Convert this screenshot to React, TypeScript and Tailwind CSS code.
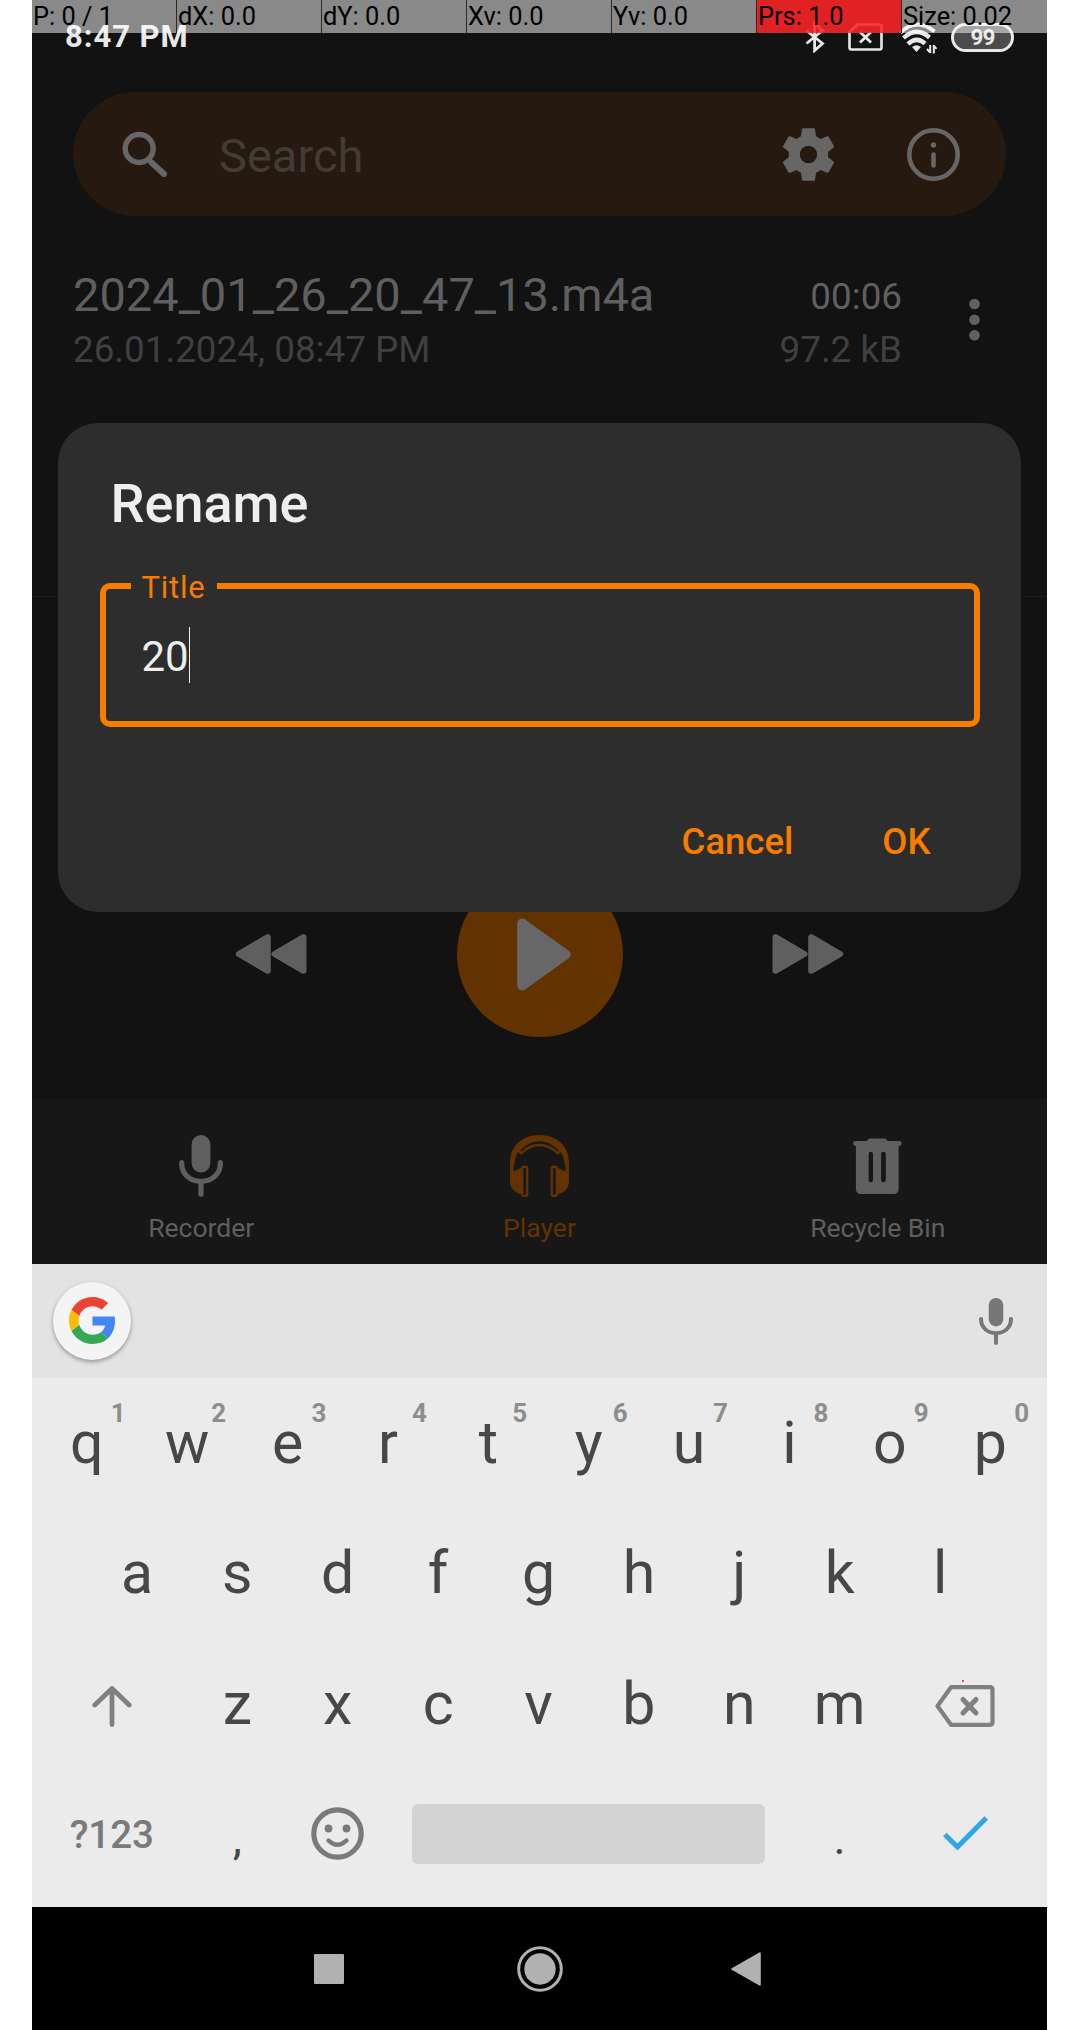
import type { ReactNode } from 'react';

const POINTER_CELLS = ['P: 0 / 1', 'dX: 0.0', 'dY: 0.0', 'Xv: 0.0', 'Yv: 0.0', 'Prs: 1.0', 'Size: 0.02'];

const TOP_KEYS: [string, string][] = [
  ['q', '1'],
  ['w', '2'],
  ['e', '3'],
  ['r', '4'],
  ['t', '5'],
  ['y', '6'],
  ['u', '7'],
  ['i', '8'],
  ['o', '9'],
  ['p', '0'],
];

function PointerBar() {
  return (
    <div className="absolute inset-x-0 top-0 flex h-[33px] bg-white/50">
      {POINTER_CELLS.map((label) => (
        <div
          key={label}
          className={
            'w-[145px] shrink-0 whitespace-nowrap border-r border-[#2a2a2a] last:border-r-0 ' +
            'pl-px text-[25.4px] leading-[32px] text-black ' +
            (label.startsWith('Prs') ? 'bg-[#ff0000]/75' : '')
          }
        >
          {label}
        </div>
      ))}
    </div>
  );
}

function StatusBar() {
  return (
    <div className="flex h-[92px] items-start justify-between pl-[33px] pr-[33px] pt-[19px] text-[#e8e8e8]">
      <span className="text-[31px] font-bold leading-[36px] tracking-[0.95px]">8:47 PM</span>
      <div className="flex h-[36px] items-center">
        <svg width="20" height="32" viewBox="0 0 20 32" fill="none" stroke="currentColor" strokeWidth="2.8">
          <path d="M1.5 9.5 17.5 22.5 9.6 29.5V2.5L17.5 9.5 1.5 22.5" />
        </svg>
        <svg className="ml-[23px]" width="35" height="28" viewBox="0 0 35 28" fill="none" stroke="currentColor">
          <path strokeWidth="2.6" strokeLinejoin="round" d="M9.5 1.5H31.5Q33.5 1.5 33.5 3.5V24.5Q33.5 26.5 31.5 26.5H3.5Q1.5 26.5 1.5 24.5V9Z" />
          <path strokeWidth="2.8" d="M12 9 23 19.5M23 9 12 19.5" />
        </svg>
        <svg className="ml-[16px]" width="38" height="34" viewBox="0 0 38 34" fill="none" stroke="currentColor">
          <path strokeWidth="4" d="M1.5 12.5Q17.5-3 35.5 11.5" />
          <path strokeWidth="4.4" d="M4.5 18Q17.5 6 30.5 17.5" />
          <path strokeWidth="4.4" d="M9 24Q17.5 16 26 23.5" />
          <path fill="currentColor" stroke="none" d="M13 27Q17.500 23.5 22 27L17.5 32Z" />
          <path strokeWidth="2" d="M31.2 25V33M34.8 25V33.5M31.2 32.5 28 29M34.8 25.5 37.5 29" />
        </svg>
        <div className="ml-[14px] flex h-[29px] w-[63px] items-center justify-center rounded-full border-[3.5px] border-[#e8e8e8] bg-[#4c4c4c] text-[22.5px] font-bold leading-none tracking-[-1px]">
          99
        </div>
      </div>
    </div>
  );
}

function SearchBar() {
  return (
    <div className="mx-[41px] flex h-[124px] items-center rounded-full bg-[#26190f] pl-[49px] pr-[46px] text-[#666666]">
      <svg width="46" height="46" viewBox="0 0 46 46" fill="none" stroke="currentColor">
        <circle cx="17.2" cy="17.5" r="14" strokeWidth="5.4" />
        <path d="M29.5 31.5 42 43" strokeWidth="6" strokeLinecap="round" />
      </svg>
      <span className="ml-[51px] flex-1 pt-1 text-[47px] leading-[56px] text-[#433c35]">Search</span>
      <svg width="63" height="63" viewBox="0 0 24 24" fill="currentColor">
        <path d="M19.43 12.98c.04-.32.07-.64.07-.98s-.03-.66-.07-.98l2.11-1.65c.19-.15.24-.42.12-.64l-2-3.46c-.12-.22-.39-.3-.61-.22l-2.49 1c-.52-.4-1.08-.73-1.69-.98l-.38-2.65C14.46 2.18 14.25 2 14 2h-4c-.25 0-.46.18-.49.42l-.38 2.65c-.61.25-1.17.59-1.69.98l-2.49-1c-.23-.09-.49 0-.61.22l-2 3.46c-.13.22-.07.49.12.64l2.11 1.65c-.04.32-.07.65-.07.98s.03.66.07.98l-2.11 1.65c-.19.15-.24.42-.12.64l2 3.46c.12.22.39.3.61.22l2.49-1c.52.4 1.08.73 1.69.98l.38 2.65c.03.24.24.42.49.42h4c.25 0 .46-.18.49-.42l.38-2.65c.61-.25 1.17-.59 1.69-.98l2.49 1c.23.09.49 0 .61-.22l2-3.46c.12-.22.07-.49-.12-.64l-2.11-1.65zM12 15.3a3.3 3.3 0 1 1 0-6.6 3.3 3.3 0 0 1 0 6.6z" />
      </svg>
      <svg className="ml-[67px]" width="53" height="53" viewBox="0 0 53 53" fill="none" stroke="currentColor">
        <circle cx="26.5" cy="26.5" r="24.2" strokeWidth="4.6" />
        <circle cx="26.5" cy="17" r="2.7" fill="currentColor" stroke="none" />
        <path d="M26.5 26.5V37.5" strokeWidth="4.6" strokeLinecap="round" />
      </svg>
    </div>
  );
}

function Recording() {
  return (
    <div className="flex h-[381px] border-b border-[#1b1b1b] pl-[41px] pr-[67px] pt-[51px]">
      <div className="flex-1">
        <div className="text-[47px] leading-[56px] text-[#5f5f5f]">2024_01_26_20_47_13.m4a</div>
        <div className="mt-[5px] text-[36.8px] leading-[44px] text-[#404040]">26.01.2024, 08:47 PM</div>
      </div>
      <div className="pt-2 text-right text-[36.8px] leading-[44px]">
        <div className="text-[#5f5f5f]">00:06</div>
        <div className="mt-[9px] text-[#404040]">97.2 kB</div>
      </div>
      <svg className="ml-[67px] mt-[31px] text-[#616161]" width="11" height="44" viewBox="0 0 11 44" fill="currentColor">
        <circle cx="5.5" cy="6" r="5.3" />
        <circle cx="5.5" cy="21.7" r="5.3" />
        <circle cx="5.5" cy="37.3" r="5.3" />
      </svg>
    </div>
  );
}

function SkipIcon({ back = false }: { back?: boolean }) {
  return (
    <svg
      className={back ? '-scale-x-100' : ''}
      width="72"
      height="40"
      viewBox="0 0 72 40"
      fill="currentColor"
      stroke="currentColor"
      strokeWidth="6"
      strokeLinejoin="round"
    >
      <path d="M3.5 3.2V36.8L32.5 20Z" />
      <path d="M39.2 3.2V36.8L68.2 20Z" />
    </svg>
  );
}

function Controls() {
  return (
    <div className="flex h-[502px] items-end justify-center pb-[62px] text-[#5f5f5f]">
      <div className="flex h-[166px] w-[268px] items-center justify-center pr-[2px]">
        <SkipIcon back />
      </div>
      <div className="flex w-[268px] justify-center">
        <div className="flex h-[166px] w-[166px] items-center justify-center rounded-full bg-[#623200] pl-[9px] text-[#676767]">
          <svg width="54" height="73" viewBox="0 0 54 73" fill="currentColor" stroke="currentColor" strokeWidth="10" strokeLinejoin="round">
            <path d="M5.2 5.5V67.5L48.5 36.5Z" />
          </svg>
        </div>
      </div>
      <div className="flex h-[166px] w-[268px] items-center justify-center">
        <SkipIcon />
      </div>
    </div>
  );
}

function MicIcon({ width, height }: { width: number; height: number }) {
  return (
    <svg width={width} height={height} viewBox="0 0 44 62" preserveAspectRatio="none" fill="none" stroke="currentColor">
      <rect x="12.6" y="0" width="18.8" height="37.5" rx="9.4" fill="currentColor" stroke="none" />
      <path d="M2.7 27.5V28.5C2.7 39 11 46.3 22 46.3S41.3 39 41.3 28.5V27.5M22 47V59.2" strokeWidth="5.2" strokeLinecap="round" />
    </svg>
  );
}

function HeadphonesIcon() {
  return (
    <svg width="59" height="62" viewBox="0 0 59 62" fill="currentColor">
      <path d="M0 46V28C0 11 12 0 29.5 0S59 11 59 28V46C59 53 54.5 58 48 59V33L55.5 36.5V32L54 26C53.5 22 52.5 19.5 51 17.5L48 19.5C43 12 37 6.5 29.5 6.5S16 12 11 19.5L8 17.5C6.5 19.5 5.5 22 5 26L3.5 32V36.5L11 33V59C4.5 58 0 53 0 46Z" />
      <path d="M11.5 16.5C22 5.5 37 5.5 47.5 16.5" fill="none" stroke="#171717" strokeWidth="3.5" />
      <path d="M11.5 18C22 7.3 37 7.3 47.5 18" fill="none" stroke="currentColor" strokeWidth="2.5" strokeLinecap="round" />
      <rect x="12.2" y="31.7" width="5" height="29" rx="1.5" fill="#171717" stroke="currentColor" strokeWidth="2.4" />
      <rect x="41.8" y="31.7" width="5" height="29" rx="1.5" fill="#171717" stroke="currentColor" strokeWidth="2.4" />
    </svg>
  );
}

function TrashIcon() {
  return (
    <svg width="49" height="62" viewBox="0 0 49 62" fill="currentColor">
      <rect x="0.2" y="6" width="48.4" height="5" rx="2.4" />
      <path d="M14 6.5Q14.5 3.5 17 3.5H31.5Q34 3.5 34.5 6.5Z" />
      <path
        fillRule="evenodd"
        d="M2.9 8H45.6V54Q45.6 59 40.6 59H7.9Q2.9 59 2.9 54ZM17.8 16.8Q15.7 16.8 15.7 19V45Q15.7 47.2 17.8 47.2T20 45V19Q20 16.8 17.8 16.8ZM30.5 16.8Q28.1 16.8 28.1 19V45Q28.1 47.2 30.5 47.2T32.8 45V19Q32.8 16.8 30.5 16.8Z"
      />
    </svg>
  );
}

function NavItem({ icon, label, color }: { icon: ReactNode; label: string; color: string }) {
  return (
    <div className={'flex flex-1 flex-col items-center pt-[36px] ' + color}>
      {icon}
      <span className="mt-[15px] text-[26.5px] leading-[32px]">{label}</span>
    </div>
  );
}

function RenameDialog() {
  return (
    <div className="absolute left-[26px] top-[423px] h-[489px] w-[963px] rounded-[40px] bg-[#2d2d2d] px-[41.5px] pt-[49px]">
      <h1 className="pl-[11px] text-[54px] font-medium leading-[64px] text-[#eeeeee]">Rename</h1>
      <div className="relative mt-[47px] flex h-[144px] items-center rounded-[10px] border-[6px] border-[#f77c00] pl-[36px]">
        <span className="absolute left-[25px] top-[-19px] w-[86px] bg-[#2d2d2d] pl-[11px] text-[31px] leading-[36px] tracking-[0.75px] text-[#f77c00]">
          Title
        </span>
        <span className="pt-[3px] text-[42px] leading-[56px] text-[#eeeeee]">20</span>
        <span className="h-[56px] w-px bg-[#eeeeee]" />
      </div>
      <div className="mt-[93px] flex justify-end gap-[89px] pr-[49px] text-[36.5px] font-medium leading-[44px] text-[#f77c00]">
        <span>Cancel</span>
        <span>OK</span>
      </div>
    </div>
  );
}

function GoogleLogo() {
  return (
    <svg width="46" height="47" viewBox="0 0 47 48" preserveAspectRatio="none">
      <path fill="#EA4335" d="M24 9.5c3.54 0 6.71 1.22 9.21 3.6l6.85-6.85C35.9 2.38 30.47 0 24 0 14.62 0 6.51 5.38 2.56 13.22l7.98 6.19C12.43 13.72 17.74 9.5 24 9.5z" />
      <path fill="#4285F4" d="M46.98 24.55c0-1.57-.15-3.09-.38-4.55H24v9.02h12.94c-.58 2.96-2.26 5.48-4.78 7.18l7.73 6c4.51-4.18 7.09-10.36 7.09-17.65z" />
      <path fill="#FBBC05" d="M10.53 28.59c-.48-1.45-.76-2.99-.76-4.59s.27-3.14.76-4.59l-7.98-6.19C.92 16.46 0 20.12 0 24c0 3.88.92 7.54 2.56 10.78l7.97-6.19z" />
      <path fill="#34A853" d="M24 48c6.48 0 11.93-2.13 15.89-5.81l-7.73-6c-2.15 1.45-4.92 2.3-8.16 2.3-6.26 0-11.57-4.22-13.47-9.91l-7.98 6.19C6.51 42.62 14.62 48 24 48z" />
    </svg>
  );
}

function Key({ label, hint }: { label: string; hint?: string }) {
  return (
    <div className="relative flex h-full w-[100.4px] items-center justify-center text-[59px] leading-[70px] text-[#474747]">
      {label}
      {hint && (
        <span className="absolute left-[calc(50%+24px)] top-[20px] text-[26px] font-bold leading-[30px] text-[#8d8d8d]">
          {hint}
        </span>
      )}
    </div>
  );
}

function Keyboard() {
  return (
    <div className="bg-[#ebebeb]">
      <div className="flex h-[114px] items-center justify-between bg-[#e3e3e3] pl-[21px] pr-[34px]">
        <div className="mb-px flex h-[78px] w-[78px] items-center justify-center rounded-full bg-[#f4f4f4] shadow-[0_2px_4px_rgba(0,0,0,0.35)]">
          <GoogleLogo />
        </div>
        <span className="text-[#777777]">
          <MicIcon width={34} height={47} />
        </span>
      </div>
      <div className="h-[529px] pl-[4.5px] pr-[6.5px]">
        <div className="flex h-[130.3px] justify-center">
          {TOP_KEYS.map(([label, hint]) => (
            <Key key={label} label={label} hint={hint} />
          ))}
        </div>
        <div className="flex h-[130.3px] justify-center">
          {'asdfghjkl'.split('').map((label) => (
            <Key key={label} label={label} />
          ))}
        </div>
        <div className="flex h-[130.3px] items-center justify-center text-[#808080]">
          <div className="flex w-[150.6px] justify-center pt-1">
            <svg width="40" height="42" viewBox="0 0 40 42" fill="none" stroke="currentColor" strokeWidth="4.8" strokeLinecap="round" strokeLinejoin="round">
              <path d="M20 39.5V4M2.8 20 20 3.5 37.2 20" />
            </svg>
          </div>
          {'zxcvbnm'.split('').map((label) => (
            <Key key={label} label={label} />
          ))}
          <div className="relative flex w-[150.6px] justify-center pt-1">
            <svg width="60" height="42" viewBox="0 0 60 42" fill="none" stroke="currentColor" strokeWidth="4.2" strokeLinejoin="round">
              <path d="M16 2.2H55Q57.5 2.2 57.5 4.7V37.3Q57.5 39.8 55 39.8H16L2.5 21Z" />
              <path d="M28 14.5 41 28M41 14.5 28 28" strokeWidth="5" strokeLinecap="round" />
            </svg>
            <span className="absolute left-[72px] top-[-1px] h-[2px] w-[2px] rounded-full bg-[#ff1010]" />
          </div>
        </div>
        <div className="flex h-[130.3px] items-center justify-center text-[#7a7a7a]">
          <div className="w-[150.6px] pt-[2px] text-center text-[38.5px] font-medium leading-[44px]">?123</div>
          <div className="w-[100.4px] pt-2 text-center text-[46px] leading-[56px] text-[#474747]">,</div>
          <div className="flex w-[100.4px] justify-center pb-[2px]">
            <svg width="53" height="53" viewBox="0 0 53 53" fill="none" stroke="currentColor">
              <circle cx="26.5" cy="26.5" r="23.7" strokeWidth="5.2" />
              <circle cx="17.5" cy="21.5" r="3.9" fill="currentColor" stroke="none" />
              <circle cx="35.5" cy="21.5" r="3.9" fill="currentColor" stroke="none" />
              <path d="M17.5 33.5Q26.5 42 35.5 33.5" strokeWidth="4.4" strokeLinecap="round" />
            </svg>
          </div>
          <div className="flex w-[401.6px] justify-center pb-px">
            <div className="h-[60px] w-[353px] rounded-[6px] bg-[#d3d3d3]" />
          </div>
          <div className="w-[100.4px] pt-2 text-center text-[46px] leading-[56px] text-[#474747]">.</div>
          <div className="flex w-[150.6px] justify-center pb-px">
            <svg width="45" height="35" viewBox="0 0 45 35" fill="none" stroke="#30a5e8" strokeWidth="5">
              <path d="M1.8 18.5 14.5 31 43.2 2" />
            </svg>
          </div>
        </div>
      </div>
    </div>
  );
}

function SystemNav() {
  return (
    <div className="flex h-[123px] items-center bg-black pl-[282px] text-[#b1b1b1]">
      <div className="h-[30px] w-[30px] rounded-[1px] bg-[#b1b1b1]" />
      <svg className="ml-[173px]" width="46" height="46" viewBox="0 0 46 46" fill="none" stroke="currentColor">
        <circle cx="23" cy="23" r="21.3" strokeWidth="3" />
        <circle cx="23" cy="23" r="15.7" fill="currentColor" stroke="none" />
      </svg>
      <svg className="ml-[168px]" width="30" height="34" viewBox="0 0 30 34" fill="currentColor" stroke="currentColor" strokeWidth="2" strokeLinejoin="round">
        <path d="M28.8 1.3V32.7L1.2 17Z" />
      </svg>
    </div>
  );
}

export default function App() {
  return (
    <div className="h-[2030px] w-[1088px] overflow-hidden bg-white pl-[32px] font-[Roboto,sans-serif]">
      <div className="relative w-[1015px] overflow-hidden">
        <div className="h-[1264px] bg-[#121212]">
          <StatusBar />
          <SearchBar />
          <Recording />
          <Controls />
          <div className="flex h-[165px] bg-[#171717]">
            <NavItem label="Recorder" color="text-[#5f5f5f]" icon={<MicIcon width={44} height={62} />} />
            <NavItem label="Player" color="text-[#623200]" icon={<HeadphonesIcon />} />
            <NavItem label="Recycle Bin" color="text-[#5f5f5f]" icon={<TrashIcon />} />
          </div>
        </div>
        <Keyboard />
        <SystemNav />
        <PointerBar />
        <RenameDialog />
      </div>
    </div>
  );
}
